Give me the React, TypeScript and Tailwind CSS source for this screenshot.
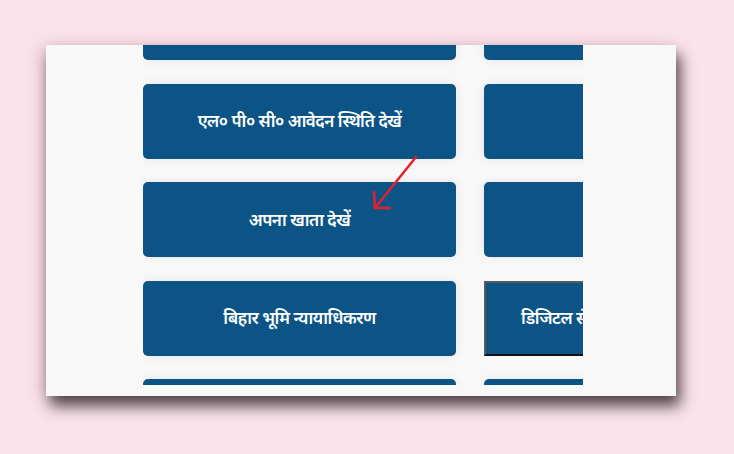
const rows = [
  ["", ""],
  ["एल० पी० सी० आवेदन स्थिति देखें", ""],
  ["अपना खाता देखें", ""],
  ["बिहार भूमि न्यायाधिकरण", "डिजिटल सेवाएँ"],
  ["", ""],
];

export default function App() {
  return (
    <div
      className="w-[734px] h-[454px] bg-[#fbe3eb] pt-[45px] pl-[46px]"
      style={{ fontFamily: '"Noto Sans", "Noto Sans Devanagari", sans-serif' }}
    >
      <div className="relative w-[630px] h-[351px] bg-[#f8f8f8] shadow-[4px_10px_14px_rgba(40,30,35,0.8),-6px_0px_16px_rgba(200,150,170,0.35)]">
        <div className="ml-[97px] w-[440px] h-[340px] overflow-hidden">
          <div className="-mt-[60px] grid grid-cols-[313px_313px] gap-x-[28px] gap-y-[23.5px]">
            {rows.map((row, i) =>
              row.map((label, j) => {
                const pressed = i === 3 && j === 1;
                return (
                  <div
                    key={`${i}-${j}`}
                    className={
                      pressed
                        ? "h-[75px] bg-[#0b5485] border-2 border-t-[#5a5a5a] border-l-[#5a5a5a] border-r-[#5a5a5a] border-b-[#111] flex items-center pl-[35px]"
                        : "h-[75px] rounded-[5px] bg-[#0b5485] shadow-[0_0_10px_rgba(0,0,0,0.08)] flex items-center justify-center"
                    }
                  >
                    <span className="text-white text-[17px] font-semibold whitespace-nowrap tracking-[-0.5px]">
                      {label}
                    </span>
                  </div>
                );
              })
            )}
          </div>
        </div>
        {/* red arrow */}
        <svg
          className="absolute left-[320px] top-[105px]"
          width="60"
          height="70"
          viewBox="0 0 60 70"
        >
          <g stroke="#e3202c" strokeWidth="2.5" strokeLinecap="round" fill="none">
            <line x1="50" y1="7" x2="9" y2="58" />
            <line x1="9" y1="58" x2="8" y2="42" />
            <line x1="9" y1="58" x2="24" y2="58" />
          </g>
        </svg>
      </div>
    </div>
  );
}
